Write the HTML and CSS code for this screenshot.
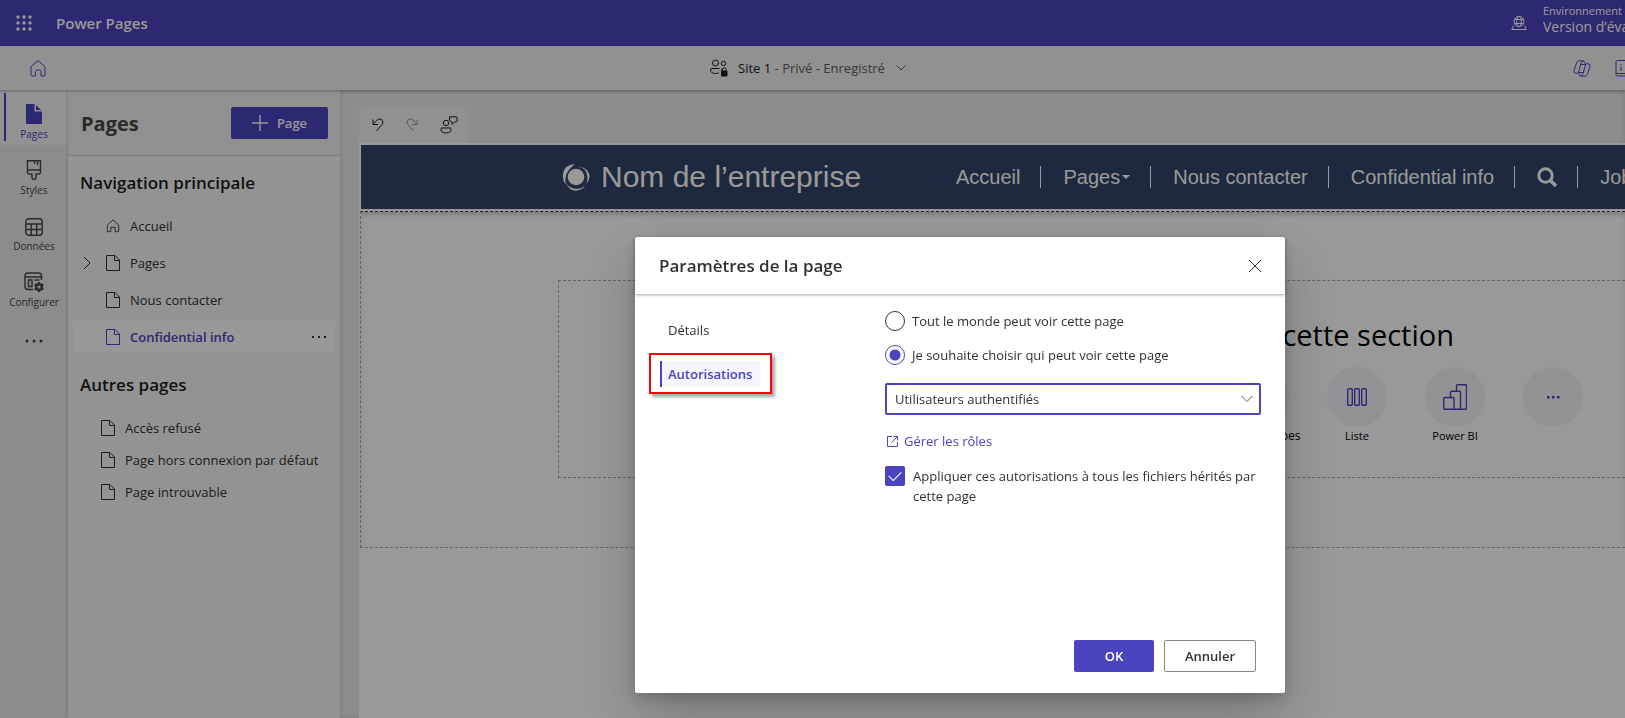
FILE: index.html
```html
<!DOCTYPE html>
<html lang="fr">
<head>
<meta charset="utf-8">
<title>Power Pages</title>
<link rel="stylesheet" href="styles.css">
</head>
<body>
<svg class="defs" aria-hidden="true">
  <symbol id="doc" viewBox="0 0 14 16"><path d="M.5.5h8.500l4.500 4.500v10.500H.5zM8.500.5v5h5"/></symbol>
  <symbol id="home" viewBox="0 0 16 16"><path d="M1.500 7 8 1l6.500 6v7.500h-4v-5h-5v5h-4z"/></symbol>
</svg>
<div class="app">
  <header class="topbar">
    <button class="waffle" aria-label="Lanceur d’applications"><svg width="16" height="16" viewBox="0 0 16 16"><g fill="currentColor"><circle cx="2" cy="2" r="1.700"/><circle cx="8" cy="2" r="1.700"/><circle cx="14" cy="2" r="1.700"/><circle cx="2" cy="8" r="1.700"/><circle cx="8" cy="8" r="1.700"/><circle cx="14" cy="8" r="1.700"/><circle cx="2" cy="14" r="1.700"/><circle cx="8" cy="14" r="1.700"/><circle cx="14" cy="14" r="1.700"/></g></svg></button>
    <span class="product">Power Pages</span>
    <div class="env">
      <svg class="line" width="16" height="16" viewBox="0 0 16 16"><circle cx="8" cy="6.500" r="5"/><ellipse cx="8" cy="6.500" rx="2.300" ry="5"/><path d="M3.500 4.500h9M3.500 8.500h9M2.500 10.500.8 14.500h14.400l-1.700-4"/></svg>
      <div class="env-text"><div class="env-label">Environnement</div><div class="env-name">Version d’évaluation</div></div>
    </div>
  </header>
  <div class="commandbar">
    <a class="home-link" href="#" aria-label="Accueil"><svg class="line" width="16" height="17" viewBox="0 0 16 17"><path d="M1 6.800 7 1.300q1-.8 2 0l6 5.500V15q0 1-1 1h-3v-4.500q0-1.500-1.300-1.500H6.800Q5.500 10 5.500 11.500V16H2q-1 0-1-1z"/></svg></a>
    <button class="site-picker">
      <svg class="line" width="18" height="18" viewBox="0 0 18 18"><circle cx="5.500" cy="4" r="3"/><circle cx="13.500" cy="4.500" r="2.200"/><path d="M9.500 9.500H2Q.6 9.500.6 11q0 3.500 5 3.500 2 0 3.400-.7M12 9.500V13"/><path fill="currentColor" d="M11.500 12h5.500v5h-5.500z"/><path d="M12.500 12v-1.500q0-1.700 1.700-1.700T16 10.500V12"/></svg>
      <span><b>Site 1</b> - Privé - Enregistré</span>
      <svg class="line" width="12" height="8" viewBox="0 0 12 8"><path d="m1.500 1.500 4.500 4.500 4.500-4.500"/></svg>
    </button>
    <div class="tools">
      <button aria-label="Copilot"><svg class="line" width="18" height="17" viewBox="0 0 18 17"><path d="M12 3.500 11.500 2Q11 .8 9.500.8H6Q4.200.8 3.600 2.800L1 10.500Q.3 13.200 3 13.200h2.200L8 3.500Q8.800.8 10.500.8M6 13.500l.5 1.500q.5 1.200 2 1.200H12q1.800 0 2.400-2L17 6.500q.7-2.700-2-2.700h-2.200L10 13.500Q9.200 16.200 7.500 16.200M7.500 4.500H12M6 12.500h4.500"/></svg></button>
      <button aria-label="Informations"><svg class="line" width="18" height="17" viewBox="0 0 18 17"><path d="M16.500 12.500V1.500q0-1-1-1h-13q-1.500 0-1.500 1.500v12.500q0 1.500 1.500 1.500h14M1 13.500h15.500M6 4v1M6 6.500V11"/></svg></button>
    </div>
  </div>
  <div class="workspace">
    <nav class="rail">
      <a class="rail-item current" href="#"><svg width="18" height="20" viewBox="0 0 18 20"><path fill="currentColor" d="M1 0h8.500v7.500H17V19q0 1-1 1H2q-1 0-1-1V1q0-1 0-1zM11 1l5 5h-5z"/></svg>Pages</a>
      <a class="rail-item" href="#"><svg class="bold" width="18" height="20" viewBox="0 0 18 20"><path d="M2.500.8h13V12q0 2-2 2H11v3.500q0 1.700-2 1.700t-2-1.700V14H4.500q-2 0-2-2zM2.500 10h13M9.500 1v3M12.500 1v4"/></svg>Styles</a>
      <a class="rail-item" href="#"><svg class="bold" width="18" height="18" viewBox="0 0 18 18"><rect x=".8" y=".8" width="16.400" height="16.400" rx="3"/><path d="M1 6h16M1 11.500h16M6.300 6v11M11.700 6v11"/></svg>Données</a>
      <a class="rail-item" href="#"><svg class="bold" width="20" height="20" viewBox="0 0 20 20"><path d="M9 17.500H4q-3 0-3-3V4q0-3 3-3h10.500q3 0 3 3v4M1 5h16.500M4.500 8h3.500v6.500H4.500zM10.500 8h5"/><circle cx="15" cy="15" r="2.800" stroke-width="2.400"/><path stroke-width="2.200" d="M15 10v1.500M15 18.500V20M10.700 12.500l1.300.8M18 16.700l1.300.8M10.700 17.500l1.300-.8M18 13.300l1.300-.8"/></svg>Configurer</a>
      <button class="rail-more" aria-label="Plus"><svg width="18" height="4" viewBox="0 0 18 4"><g fill="currentColor"><circle cx="2" cy="2" r="1.500"/><circle cx="9" cy="2" r="1.500"/><circle cx="16" cy="2" r="1.500"/></g></svg></button>
    </nav>
    <aside class="panel">
      <div class="panel-head"><h1>Pages</h1>
        <button class="add"><svg class="line" width="16" height="16" viewBox="0 0 16 16"><path stroke-width="1.400" d="M8 0v16M0 8h16"/></svg>Page</button></div>
      <h2>Navigation principale</h2>
      <ul class="tree">
        <li><a href="#"><svg class="line" width="14" height="16" viewBox="0 0 16 16"><use href="#home"/></svg>Accueil</a></li>
        <li><svg class="line chev" width="8" height="14" viewBox="0 0 8 14"><path d="m1 1 6 6-6 6"/></svg><a href="#"><svg class="line" width="14" height="16"><use href="#doc"/></svg>Pages</a></li>
        <li><a href="#"><svg class="line" width="14" height="16"><use href="#doc"/></svg>Nous contacter</a></li>
        <li class="selected"><a href="#"><svg class="line" width="14" height="16"><use href="#doc"/></svg>Confidential info</a><button class="more" aria-label="Plus d’options"><svg width="16" height="3" viewBox="0 0 16 3"><path fill="currentColor" d="M1 0h2v2H1zM7 0h2v2H7zM13 0h2v2h-2z"/></svg></button></li>
      </ul>
      <h2 class="second">Autres pages</h2>
      <ul class="tree others">
        <li><a href="#"><svg class="line" width="14" height="16"><use href="#doc"/></svg>Accès refusé</a></li>
        <li><a href="#"><svg class="line" width="14" height="16"><use href="#doc"/></svg>Page hors connexion par défaut</a></li>
        <li><a href="#"><svg class="line" width="14" height="16"><use href="#doc"/></svg>Page introuvable</a></li>
      </ul>
    </aside>
    <main class="canvas">
      <div class="edit-tab">
        <button aria-label="Annuler la modification"><svg class="line" width="12" height="14" viewBox="0 0 12 14"><path d="M1 1.500v5h5M1 6.500l3.500-4Q7-.2 9.700 1.500q2.600 2.500.3 5L4.500 13"/></svg></button>
        <button class="off" aria-label="Rétablir"><svg class="line" width="12" height="14" viewBox="0 0 12 14"><path d="M11 1.500v5H6M11 6.500l-3.500-4Q5-.2 2.300 1.500q-2.600 2.500-.3 5L7.500 13"/></svg></button>
        <button aria-label="Commentaires"><svg class="line" width="18" height="18" viewBox="0 0 18 18"><circle cx="6" cy="7" r="2.700"/><path d="M1.500 12h9q.5 0 .5 1 0 4-5 4t-5-4q0-1 .5-1zM9.500.8H16q1 0 1 1V5q0 1-1 1h-1.500L12 8.300V6L9.500 4.500Z"/></svg></button>
      </div>
      <div class="site">
        <div class="site-head">
          <svg class="logo" width="28" height="28" viewBox="0 0 28 28"><circle cx="14" cy="14" r="8.300" fill="currentColor"/><path fill="currentColor" d="M13 1Q1 2 .8 13q0 5 3.200 9Q1 10 13 1zM15 3.500Q25 4 25.500 15q0 3-1.500 6 4-4 3.500-9Q26 4 15 3.500zM4.500 20Q8 27 18 25.500q3-.8 5-3-2 4.500-9 5.200Q6.500 27.500 4.500 20z"/></svg>
          <span class="brand">Nom de l’entreprise</span>
          <nav class="site-nav">
            <a href="#">Accueil</a><a href="#">Pages<i class="caret"></i></a><a href="#">Nous contacter</a><a href="#">Confidential info</a><a href="#" aria-label="Rechercher"><svg width="20" height="20" viewBox="0 0 20 20"><circle cx="8.500" cy="8.500" r="6.700" fill="none" stroke="currentColor" stroke-width="3"/><path stroke="currentColor" stroke-width="3.600" d="m13 13 6 6"/></svg></a><a href="#">Job</a>
          </nav>
        </div>
        <section class="zone">
          <div class="column">
            <div class="chooser">
              <p class="prompt">Choisissez un composant à ajouter à cette section</p>
              <div class="tiles">
                <button class="tile"><span class="disc"></span>Form. à étapes</button>
                <button class="tile"><span class="disc"><svg class="bold" width="20" height="18" viewBox="0 0 20 18"><rect x=".7" y=".7" width="4.600" height="16.600" rx="1"/><rect x="7.700" y=".7" width="4.600" height="16.600" rx="1"/><rect x="14.700" y=".7" width="4.600" height="16.600" rx="1"/></svg></span>Liste</button>
                <button class="tile"><span class="disc"><svg class="bold" width="24" height="26" viewBox="0 0 24 26"><path d="M13.500 7V1.700q0-1 1-1h8q1 0 1 1V24.300q0 1-1 1H1.700q-1 0-1-1V14.500q0-1 1-1H10q1 0 1 1v10.500M7.500 13V8.300q0-1 1-1h8q1 0 1 1V25"/></svg></span>Power BI</button>
                <button class="tile" aria-label="Plus de composants"><span class="disc"><svg width="14" height="3" viewBox="0 0 14 3"><path fill="currentColor" d="M1 0h2.500v2.500H1zM6 0h2.500v2.500H6zM11 0h2.500v2.500H11z"/></svg></span></button>
              </div>
            </div>
          </div>
        </section>
      </div>
    </main>
  </div>
</div>
<div class="overlay">
  <form class="dialog" role="dialog" aria-labelledby="dlg-title">
    <header class="dialog-head"><h2 id="dlg-title">Paramètres de la page</h2>
      <button type="button" class="close" aria-label="Fermer"><svg class="line" width="14" height="14" viewBox="0 0 14 14"><path d="m1 1 12 12M13 1 1 13"/></svg></button></header>
    <div class="dialog-body">
      <nav class="tabs"><a href="#">Détails</a><a class="active" href="#">Autorisations</a></nav>
      <div class="fields">
        <label class="choice"><input type="radio" name="access">Tout le monde peut voir cette page</label>
        <label class="choice"><input type="radio" name="access" checked>Je souhaite choisir qui peut voir cette page</label>
        <div class="select"><select aria-label="Rôle"><option>Utilisateurs authentifiés</option></select><svg class="line" width="12" height="8" viewBox="0 0 12 8"><path d="m.5 1 5.500 5.500L11.500 1"/></svg></div>
        <a class="roles" href="#"><svg class="line" width="11" height="11" viewBox="0 0 11 11"><path d="M5 .5H.5v10h10V6M6.500.5h4v4M10.500.5 4.500 6.500"/></svg>Gérer les rôles</a>
        <label class="apply"><input type="checkbox" checked><span>Appliquer ces autorisations à tous les fichiers hérités par cette page</span></label>
      </div>
    </div>
    <footer class="dialog-foot"><button type="button" class="ok">OK</button><button type="button" class="cancel">Annuler</button></footer>
  </form>
</div>
</body>
</html>
```

FILE: styles.css
```css
* { box-sizing: border-box; }
body { margin: 0; font: 13px/20px "Open Sans", "Noto Sans", sans-serif; color: #323130; overflow: hidden; }
h1, h2, p, ul { margin: 0; padding: 0; }
button { font: inherit; color: inherit; background: none; border: 0; padding: 0; }
a { color: inherit; text-decoration: none; }
svg { flex: none; }
.defs { display: none; }
.line, .bold { fill: none; stroke: currentColor; stroke-width: 1; }
.bold { stroke-width: 1.4; }

.app { display: flex; flex-direction: column; height: 100vh; overflow: hidden; }
.topbar { display: flex; align-items: center; height: 46px; padding-left: 16px; background: #4b44bf; color: #fff; flex: none; }
.waffle { display: flex; }
.product { margin-left: 24px; font-size: 15px; font-weight: 600; }
.env { display: flex; align-items: center; gap: 16px; margin-left: auto; }
.env-text { width: 82px; overflow: hidden; white-space: nowrap; padding-bottom: 6px; }
.env-label { font-size: 11px; line-height: 14px; }
.env-name { font-size: 14px; line-height: 18px; }

.commandbar { display: grid; grid-template-columns: 1fr auto 1fr; align-items: center; height: 44px; padding-left: 30px; background: #f2f2f2; flex: none; position: relative; box-shadow: 0 1px 3px rgba(0, 0, 0, .3); }
.home-link { display: flex; color: #4b44bf; }
.site-picker { display: flex; align-items: center; gap: 10px; padding-right: 38px; color: #605e5c; }
.site-picker b { font-weight: 400; color: #201f1e; }
.site-picker svg:first-child { color: #201f1e; }
.tools { display: flex; justify-content: flex-end; gap: 24px; color: #4b44bf; overflow: hidden; margin-right: -8px; }
.tools button { display: flex; }

.workspace { display: flex; flex: 1; min-height: 0; }
.rail { width: 68px; flex: none; background: #e9e9e9; padding-top: 3px; font-size: 10px; line-height: 14px; color: #484644; }
.rail-item { display: flex; flex-direction: column; align-items: center; justify-content: flex-end; height: 48px; gap: 3px; margin-bottom: 8px; }
.rail-item.current { background: linear-gradient(#4b44bf, #4b44bf) 4px 0 / 2px 48px no-repeat #f4f4f4; color: #4b44bf; box-shadow: 0 4px #f4f4f4, 0 -3px #f4f4f4; }
.rail-more { display: flex; margin: 30px auto 0; }

.panel { width: 272px; flex: none; background: #f5f5f5; box-shadow: 0 0 3px rgba(0, 0, 0, .25); }
.panel-head { display: flex; align-items: center; justify-content: space-between; height: 66px; padding: 0 12px 0 13px; background: #f0f0f0; border-bottom: 1px solid #d2d0ce; }
.panel h1 { font-size: 20px; line-height: 28px; padding-top: 2px; color: #484644; }
.add { display: flex; align-items: center; justify-content: center; gap: 9px; width: 97px; height: 32px; background: #4b44bf; color: #fff; font-weight: 600; border-radius: 2px; }
.panel h2 { padding: 14px 12px; font-size: 17px; line-height: 26px; font-weight: 600; color: #201f1e; }
.tree { list-style: none; display: flex; flex-direction: column; gap: 5px; padding: 0 5px; }
.tree li { display: flex; align-items: center; height: 32px; padding: 0 8px 0 33px; position: relative; }
.tree a { display: flex; align-items: center; gap: 10px; white-space: nowrap; }
.chev { position: absolute; left: 10px; }
.tree .selected { background: #fdfdfd; }
.selected a { color: #4b44bf; font-weight: 600; }
.more { margin-left: auto; display: flex; }
.panel .second { padding: 19px 12px 14px; }
.others { gap: 0; }
.others li { padding-left: 28px; }

.canvas { flex: 1; min-width: 0; overflow: hidden; padding: 17px 0 0 19px; background: #edebe9; box-shadow: inset 0 0 6px rgba(0, 0, 0, .15); display: flex; flex-direction: column; }
.edit-tab { display: flex; align-items: center; justify-content: space-between; width: 108px; height: 36px; padding: 0 9px 0 13px; background: #f2f2f2; border-radius: 5px 5px 0 0; color: #201f1e; }
.edit-tab button { display: flex; }
.edit-tab .off { color: #979593; }
.site { flex: 1; border: solid #fff; border-width: 2px 0 0 2px; background: #fff; }
.site-head { display: flex; align-items: center; height: 64px; padding-left: 201px; background: #334468; color: #fff; font-family: "Liberation Sans", Arial, sans-serif; white-space: nowrap; }
.brand { width: 350px; padding-left: 11px; font-size: 30px; line-height: 36px; flex: none; }
.site-nav { display: flex; align-items: center; font-size: 20px; line-height: 22px; }
.site-nav a { display: flex; align-items: center; height: 22px; padding: 0 20px 0 22px; border-right: 1px solid #fff; }
.site-nav a:first-child { padding-left: 16px; }
.site-nav a:last-child { border: 0; }
.caret { margin-left: 2px; border: 4px solid transparent; border-top-color: #fff; border-bottom: 0; }
.zone { margin: 2px 0 0 -1px; padding: 68px 0 69px 197px; border: 1px dashed #a6a6a6; border-top-color: #333; border-right: 0; box-shadow: inset 0 4px 6px -3px rgba(0, 0, 0, .3); }
.column { height: 198px; border: 1px dashed #a6a6a6; border-right: 0; display: flex; justify-content: flex-end; align-items: center; overflow: hidden; }
.chooser { margin-right: 28px; color: #000; }
.prompt { font-size: 29px; line-height: 40px; white-space: nowrap; text-align: right; padding-right: 143px; margin-bottom: 12px; }
.tiles { display: flex; justify-content: flex-end; gap: 10px; }
.tile { display: flex; flex-direction: column; align-items: center; gap: 1px; width: 88px; height: 76px; font-size: 11px; line-height: 16px; white-space: nowrap; }
.tile:first-child { font-size: 12px; }
.disc { display: flex; align-items: center; justify-content: center; flex: none; width: 60px; height: 60px; border-radius: 50%; background: #f5f5fb; color: #4b44bf; }

.overlay { position: fixed; inset: 0; padding: 237px 0 0 635px; background: rgba(0, 0, 0, .4); }
.dialog { display: flex; flex-direction: column; width: 650px; min-height: 456px; background: #fff; border-radius: 2px; box-shadow: 0 26px 58px rgba(0, 0, 0, .22), 0 5px 14px rgba(0, 0, 0, .18); }
.dialog-head { display: flex; align-items: center; justify-content: space-between; height: 57px; padding: 0 23px 0 24px; box-shadow: 0 1px 3px rgba(0, 0, 0, .35); }
.dialog-head h2 { font-size: 17px; line-height: 24px; font-weight: 600; }
.close { display: flex; }
.dialog-body { display: flex; flex: 1; justify-content: space-between; padding: 17px 24px 0 25px; }
.tabs { display: flex; flex-direction: column; align-items: flex-start; gap: 18px; padding-top: 6px; }
.tabs a { padding: 3px 8px; }
.tabs .active { position: relative; border-left: 2px solid #4b44bf; padding-left: 6px; background: #f5f6fc; color: #4b44bf; font-weight: 600; }
.tabs .active::after { content: ""; position: absolute; inset: -8px -12px -7px -13px; border: 2px solid #f00; box-shadow: 3px 3px 3px rgba(0, 0, 0, .35); }
.fields { width: 376px; }
.choice { display: flex; align-items: center; gap: 7px; margin-bottom: 14px; }
input { appearance: none; flex: none; width: 20px; height: 20px; margin: 0; }
.choice input { border: 1px solid #323130; border-radius: 50%; }
.choice input:checked { border-color: #4b44bf; background: radial-gradient(circle, #4b44bf 5px, transparent 6px); }
.select { display: flex; align-items: center; margin: 18px 0 16px; position: relative; }
.select select { appearance: none; width: 100%; height: 32px; padding: 0 8px; border: 2px solid #4b44bf; border-radius: 2px; background: #fff; font: inherit; color: inherit; }
.select svg { position: absolute; right: 8px; color: #605e5c; }
.roles { display: flex; align-items: center; gap: 6px; padding-left: 2px; color: #4b44bf; margin-bottom: 15px; }
.apply { display: flex; gap: 8px; }
.apply input { border-radius: 2px; background: #4b44bf; display: flex; align-items: center; justify-content: center; }
.apply input::after { content: ""; width: 11px; height: 6px; margin-bottom: 4px; border: solid #fff; border-width: 0 0 1px 1px; transform: rotate(-45deg); }
.dialog-foot { display: flex; justify-content: flex-end; gap: 10px; padding: 0 29px 21px; font-weight: 600; }
.dialog-foot button { height: 32px; border-radius: 2px; }
.ok { width: 80px; background: #4b44bf; color: #fff; }
.cancel { width: 92px; border: 1px solid #8a8886; }
```
